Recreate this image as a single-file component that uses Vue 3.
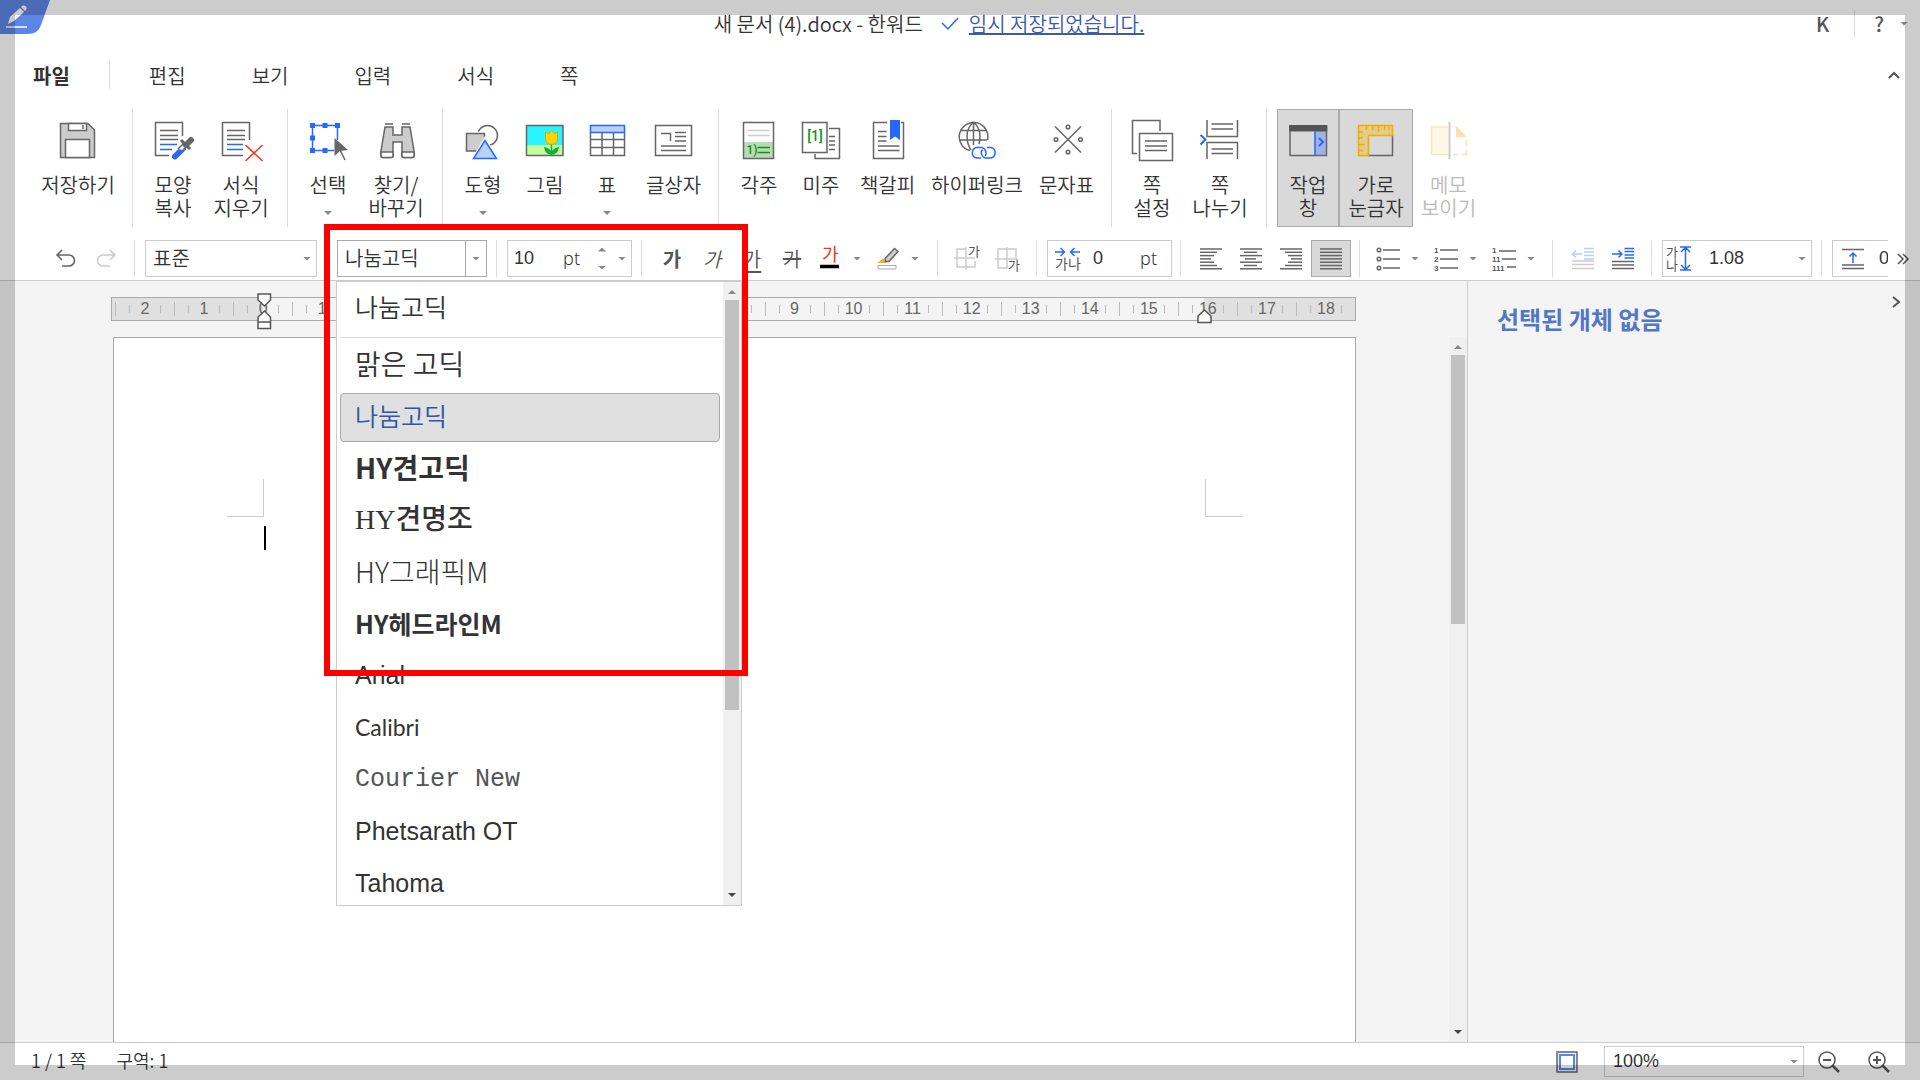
<script setup>
import { ref } from "vue";

const G = 'fill="none" stroke="#666" stroke-width="1.5"';
const B = 'fill="none" stroke="#2468ff" stroke-width="1.5"';

// 40 x 40 ribbon icons
const icons = {
  save: `<path d="M2.5 3.5H30L36.5 10V37.5H2.5Z" fill="#ccc" stroke="#666" stroke-width="1.5"/><path d="M10.5 3.5H28.5V10.5H10.5Z M7.5 19.5H31.5V37.5H7.5Z" fill="#fff" stroke="#666" stroke-width="1.5"/><path d="M25 5V9" ${G}/>`,
  copyFormat: `<path d="M29.5 16V2.5H2.5V35.5H16M7 10.5H25M7 15.5H25M7 19.5H25" ${G}/><path d="M7 24.5H24M7 29.5H19" ${B}/><path d="M22 36.5L30 28.5" stroke="#2468ff" stroke-width="6" stroke-linecap="round"/><path d="M25 29L31 23L34 26L30 30" fill="#fff" stroke="#666" stroke-width="1.5"/><path d="M33 25L38 20" stroke="#666" stroke-width="6" stroke-linecap="round"/><path d="M28 20L37 29" stroke="#666" stroke-width="3"/>`,
  clearFormat: `<path d="M28.5 20V2.5H1.5V35.5H22M6 10.5H24M6 15.5H24M6 19.5H24" ${G}/><path d="M6 24.5H22M6 29.5H22" ${B}/><path d="M24.5 25L41.5 41M41.5 25L24.5 41" fill="none" stroke="#e8391d" stroke-width="1.5"/>`,
  select: `<path d="M29.5 20V5.5H4.5V30.5H26" ${B}/><path d="M2 3h5v5H2zM14.5 3h5v5h-5zM27 3h5v5h-5zM2 15.5h5v5H2zM2 28h5v5H2zM14.5 28h5v5h-5z" fill="#2468ff"/><path d="M26.5 18L40 30L32 31L26.5 36Z" fill="#666"/><path d="M32 30L37 40" stroke="#666" stroke-width="1.5"/>`,
  find: `<path d="M9 7H17V15H26V7H34L38 31V36Q38 37.5 36 37.5H28Q26 37.5 26 36V22H17V36Q17 37.5 15 37.5H7Q5 37.5 5 36V31Z" fill="#ccc" stroke="#666" stroke-width="1.5"/><path d="M5 32H17V36Q17 37.5 15 37.5H7Q5 37.5 5 36ZM26 32H38V36Q38 37.5 36 37.5H28Q26 37.5 26 36Z" fill="#fff" stroke="#666" stroke-width="1.5"/><path d="M9 4H17M26 4H34" ${G}/>`,
  shapes: `<circle cx="24.5" cy="15.5" r="10" ${G}/><path d="M1 11.5H22V33H1Z" fill="#fff"/><path d="M3.5 13.5H21.5V31H3.5Z" fill="#ccc" stroke="#666" stroke-width="1.5"/><path d="M22 16L36 40H8Z" fill="#fff"/><path d="M22 20.5L33.5 38.5H10.5Z" fill="#bcd0ff" stroke="#2468ff" stroke-width="1.5"/>`,
  picture: `<path d="M1.5 5.5H38V35.5H1.5Z" fill="#2af4ff"/><path d="M1.5 25H38V35.5H1.5Z" fill="#c5ff9c"/><path d="M1.5 5.5H38V35.5H1.5Z" ${G}/><path d="M26.5 24V34M26.5 34Q21 34 20 28Q25 29 26.5 34Q28 29 33 28Q32 34 26.5 34" fill="#10ae3c" stroke="#10ae3c" stroke-width="1.5"/><path d="M20.5 12L23.5 14L26.5 10.5L29.5 14L32.5 12V19Q32 24 26.5 24.5Q21 24 20.5 19Z" fill="#ffd500" stroke="#e3a500"/>`,
  table: `<path d="M3.5 12.5V35.5H37.5V12.5M3.5 19.5H37.5M3.5 27.5H37.5M15 12.5V35.5M26.5 12.5V35.5" ${G}/><path d="M3.5 5.5H37.5V12.5H3.5Z" fill="#bcd0ff" stroke="#2468ff" stroke-width="1.5"/>`,
  textbox: `<path d="M1.5 5.5H37.5V35.5H1.5ZM7 13.5H16.5V21M21 12.5H32M21 16.5H32M21 21H32M7 26H32M7 30.5H32" ${G}/>`,
  footnote: `<path d="M4.5 22H34.5V38.5H4.5Z" fill="#b7dcb5"/><path d="M4.5 2.5H34.5V38.5H4.5Z" ${G}/><path d="M8.5 10.5H30.5M8.5 15.5H30.5" stroke="#ccc" stroke-width="1.5"/><text x="7.5" y="34" font-family="Roboto" font-size="12" font-weight="500" fill="#119211">1)</text><path d="M18.5 27.5H31M18.5 32.5H31" stroke="#119211" stroke-width="1.5"/>`,
  endnote: `<path d="M28 8.5H38.5V38.5H14V34M28 16.5H34M28 21H34M28 25H34M28 29.5H34" ${G}/><path d="M1.5 2.5H26V32.5H1.5Z" fill="#fff" stroke="#666" stroke-width="1.5"/><text x="14" y="21" font-family="Roboto" font-size="14" font-weight="500" text-anchor="middle" fill="#119211">[1]</text>`,
  bookmark: `<path d="M19 2.5H5.5V38.5H35.5V2.5H33M10 11.5H18.5M10 16.5H18.5M10 21H18.5M10 26H31.5M10 30.5H31.5" ${G}/><path d="M22 0H32V20L27 16.5L22 20Z" fill="#2468ff"/>`,
  hyperlink: `<path d="M13 30.6A14.3 14.3 0 1 1 30.5 20M16.5 2V25M16.5 2Q10 8 10 16Q10 24 14 30M16.5 2Q23 8 23 16Q23 21 22 24M4 10.5H29M2.5 20H30" ${G}/><path d="M24 38H19.5A5.4 5.4 0 0 1 19.5 27.5H25A5.4 5.4 0 0 1 28 36M30 27.5H34A5.4 5.4 0 0 1 34 38H28A5.4 5.4 0 0 1 25.5 29.5" ${B}/>`,
  charmap: `<path d="M8 6.5L34 32.5M34 6.5L8 32.5" ${G}/><circle cx="21" cy="7" r="1.8" ${G}/><circle cx="21" cy="32" r="1.8" ${G}/><circle cx="9" cy="19.5" r="1.8" ${G}/><circle cx="33.5" cy="19.5" r="1.8" ${G}/>`,
  pageSetup: `<path d="M28 11V.5H.5V33.5H5M7.5 13.5H40.5V40.5H7.5ZM13 21H35M13 26H35M13 30.5H35" ${G}/>`,
  pageBreak: `<path d="M7 0V16.5H37.5V0M7 39V22.5H37.5V39M11.5 4H33M11.5 9H33M11.5 29H33M11.5 33.5H33" ${G}/><path d="M.5 15L5.5 19.5L.5 24.5" fill="none" stroke="#2468ff" stroke-width="2"/>`,
  taskPane: `<path d="M26.5 10H38.5V35.5H26.5Z" fill="#9fb3e6"/><path d="M2 6H38.5V35.5H2Z" ${G}/><path d="M1.2 5H39.2V11.5H1.2Z" fill="#555"/><path d="M27 11.5V35" ${B}/><path d="M31 18L35 22L31 26" fill="none" stroke="#2468ff" stroke-width="2"/>`,
  ruler: `<path d="M36.5 15V35.5H12.5" ${G}/><path d="M2.5 5.5H36.5V15.5H12.5V35.5H2.5Z" fill="#e3cd8d" stroke="#f3ac00" stroke-width="1.5"/><path d="M10.5 6V10M16.5 6V10M22.5 6V12M28.5 6V10M33 6V10M3 12H7M3 18H7M3 24.5H8.5M3 30.5H7" stroke="#f3ac00" stroke-width="1.5"/>`,
  memo: `<path d="M19 7H2.5V34.5H19" fill="#fff7e6" stroke="#fbe6b8" stroke-width="1.5"/><path d="M20.500 2V39" stroke="#ccc" stroke-width="2"/><path d="M24 6.5H28L38 17H27V7" fill="#fbe2ac"/><path d="M37.5 20V26M37.5 30V34.5H33M29 34.5H24" fill="none" stroke="#fbe2ac" stroke-width="1.5"/>`,
};

const lines = (rows) =>
  rows.map(([a, b], i) => `<path d="M${a} ${2 + i * 3.3}H${b}" ${G}/>`).join("");
const glyph = (x, y, size, text = "가", fill = "#555") =>
  `<text x="${x}" y="${y}" font-size="${size}" font-weight="400" fill="${fill}">${text}</text>`;
const digit = (y, text) =>
  `<text x="0" y="${y}" font-family="Liberation Sans" font-size="8" font-weight="700" fill="#555">${text}</text>`;

// 24 x 24 toolbar icons
const tools = {
  undo: `<path d="M8 3L3 8L8 13M3 8H15A5.5 5.5 0 0 1 15 19H8" fill="none" stroke="#666" stroke-width="1.6"/>`,
  redo: `<path d="M16 3L21 8L16 13M21 8H9A5.5 5.5 0 0 0 9 19H16" fill="none" stroke="#ccc" stroke-width="1.6"/>`,
  fontColor: `${glyph(4, 14, 18, "가", "#e8391d")}<path d="M2 19.5H21" stroke="#000" stroke-width="3.5"/>`,
  highlight: `<path d="M1 16L7 11.5L11 16Z" fill="#f7b21a"/><path d="M9 11.5L18.5 1.5L22 4.5L13 14.5L9.5 14.5Z" fill="#ccc" stroke="#666" stroke-width="1.5"/><path d="M2 18.5H20V22H2Z" fill="#fff" stroke="#aaa"/>`,
  superscript: `<path d="M10 2H1V20H19V14M-2 11H19M10 0V23" fill="none" stroke="#ccc" stroke-width="1.5"/>${glyph(12, 9, 13)}`,
  subscript: `<path d="M11 21H2V2H20V12M-1 12H21M11 0V22" fill="none" stroke="#ccc" stroke-width="1.5"/>${glyph(12, 23, 13)}`,
  spacing: `<path d="M0 5H9M5.5 1L9.5 5L5.5 9M25 5H16M19.5 1L15.5 5L19.5 9" ${B}/>${glyph(0, 22, 14, "가나")}`,
  left: lines([[1, 23], [1, 18], [1, 15], [1, 12], [1, 15], [1, 18], [1, 23]]),
  center: lines([[1, 23], [5, 18], [1, 23], [6, 17], [1, 23], [5, 18], [1, 23]]),
  right: lines([[1, 23], [6, 23], [9, 23], [12, 23], [9, 23], [6, 23], [1, 23]]),
  justify: lines([[1, 23], [1, 23], [1, 23], [1, 23], [1, 23], [1, 23], [1, 23]]),
  bullets: `<path d="M7 3H24M7 12H24M7 21H24" ${G}/><circle cx="3" cy="3" r="1.8" ${G}/><circle cx="3" cy="12" r="1.8" ${G}/><circle cx="3" cy="21" r="1.8" ${G}/>`,
  numbers: `<path d="M6 3H24M6 12H24M6 21H24" ${G}/>${digit(6, "1")}${digit(15, "2")}${digit(24, "3")}`,
  outline: `<path d="M7 4H24M10 12H24M15 20H24" ${G}/>${digit(6, "1")}${digit(15, "11")}${digit(24, "111")}`,
  outdent: `<path d="M1 14H23M1 17.5H23M1 21.5H23" fill="none" stroke="#ccc" stroke-width="1.5"/><path d="M13 1.5H23M13 5H23M13 8.5H23M13 12H23M11 7H1.5M5 3.5L1.5 7L5 10.5" fill="none" stroke="#b9ceff" stroke-width="1.5"/>`,
  indent: `<path d="M1 14.5H23M1 18H23M1 21.5H23" ${G}/><path d="M13.5 1.5H23M13.5 4.5H23M13.5 8H23M13.5 11H23M1 7H11M7.5 3.5L11 7L7.5 10.5" ${B}/>`,
  lineHeight: `${glyph(0, 11, 13)}${glyph(0, 24, 13, "나")}<path d="M14 1H25M14 24H25M19.5 2V23M15 6L19.5 1.5L24 6M15 19L19.5 23.5L24 19" ${B}/>`,
  spaceAbove: `<path d="M1 2.5H23M1 18H23M1 21.5H23" ${G}/><path d="M12 16V6M8.5 9.5L12 6L15.5 9.5" ${B}/>`,
};

const menus = ["편집", "보기", "입력", "서식", "쪽"];

const groups = [
  [{ icon: "save", label: "저장하기", size: "w90" }],
  [
    { icon: "copyFormat", label: "모양\n복사" },
    { icon: "clearFormat", label: "서식\n지우기", size: "w74" },
  ],
  [
    { icon: "select", label: "선택", arrow: true },
    { icon: "find", label: "찾기/\n바꾸기", size: "w74" },
  ],
  [
    { icon: "shapes", label: "도형", arrow: true },
    { icon: "picture", label: "그림" },
    { icon: "table", label: "표", arrow: true },
    { icon: "textbox", label: "글상자", size: "w71" },
  ],
  [
    { icon: "footnote", label: "각주" },
    { icon: "endnote", label: "미주" },
    { icon: "bookmark", label: "책갈피", size: "w71" },
    { icon: "hyperlink", label: "하이퍼링크", size: "w108" },
    { icon: "charmap", label: "문자표", size: "w71" },
  ],
  [
    { icon: "pageSetup", label: "쪽\n설정" },
    { icon: "pageBreak", label: "쪽\n나누기", size: "w74" },
  ],
  [
    { icon: "taskPane", label: "작업\n창", pressed: true },
    { icon: "ruler", label: "가로\n눈금자", size: "w74", pressed: true },
    { icon: "memo", label: "메모\n보이기", size: "w71", disabled: true },
  ],
];

const aligns = [
  { icon: "left", label: "왼쪽 정렬" },
  { icon: "center", label: "가운데 정렬" },
  { icon: "right", label: "오른쪽 정렬" },
  { icon: "justify", label: "양쪽 정렬" },
];
const align = ref("justify");

const lists = [
  { icon: "bullets", label: "글머리 기호" },
  { icon: "numbers", label: "번호 매기기" },
  { icon: "outline", label: "다단계 목록" },
];

const fonts = [
  { name: "맑은 고딕", face: "malgun" },
  { name: "나눔고딕", face: "nanum" },
  { name: "HY견고딕", face: "heavy" },
  { name: "HY견명조", face: "myungjo" },
  { name: "HY그래픽M", face: "thin" },
  { name: "HY헤드라인M", face: "headline" },
  { name: "Arial", face: "arial" },
  { name: "Calibri", face: "calibri" },
  { name: "Courier New", face: "courier" },
  { name: "Phetsarath OT", face: "arial" },
  { name: "Tahoma", face: "arial" },
];
const font = ref("나눔고딕");
const fontSize = ref("10");
const charSpacing = ref("0");
const spaceAbove = ref("0");

const marks = Array.from({ length: 21 }, (_, i) => Math.abs(i - 2));
</script>

<template>
  <div class="app">
    <header class="header">
      <div class="titlebar">
        <svg class="logo" width="50" height="34" viewBox="0 0 50 34">
          <path d="M0 0H50L41 25Q38 34 28 34H0Z" fill="#5d85e3" />
          <path d="M8 24L10 17L20 8L24 12L14 21Z" fill="#fff" />
          <path d="M21 7L23 5.5Q25 5 26.5 7Q27 9 25 11Z" fill="#fff" />
          <path d="M6 27H27" stroke="#fff" stroke-width="1.5" />
        </svg>
        <div class="doc">
          <span>새 문서 (4).docx - 한워드</span>
          <svg width="18" height="14" viewBox="0 0 18 14">
            <path d="M1 6L7 12L17 1" fill="none" stroke="#2468ff" stroke-width="1.5" />
          </svg>
          <a href="#">임시 저장되었습니다.</a>
        </div>
        <div class="account">
          <button class="user">K</button>
          <span class="rule"></span>
          <button class="help">?</button>
          <i class="tri"></i>
        </div>
      </div>

      <nav class="menu">
        <button class="file">파일</button>
        <span class="rule"></span>
        <button v-for="m in menus" :key="m">{{ m }}</button>
        <button class="fold" aria-label="접기">
          <svg width="12" height="10" viewBox="0 0 12 10">
            <path d="M1 8L6 3L11 8" fill="none" stroke="#555" stroke-width="2" />
          </svg>
        </button>
      </nav>

      <div class="ribbon">
        <div v-for="(group, i) in groups" :key="i" class="group">
          <button
            v-for="item in group"
            :key="item.icon"
            :class="[item.size, { pressed: item.pressed }]"
            :disabled="item.disabled"
          >
            <svg width="40" height="40" viewBox="0 0 40 40" v-html="icons[item.icon]"></svg>
            <span class="label">{{ item.label }}</span>
            <i v-if="item.arrow" class="tri"></i>
          </button>
        </div>
      </div>

      <div class="toolbar">
        <button class="tool" aria-label="되돌리기">
          <svg width="24" height="24" viewBox="0 0 24 24" v-html="tools.undo"></svg>
        </button>
        <button class="tool" aria-label="다시 실행" disabled>
          <svg width="24" height="24" viewBox="0 0 24 24" v-html="tools.redo"></svg>
        </button>
        <span class="sep tight"></span>
        <div class="field style-field">
          <select aria-label="스타일">
            <option>표준</option>
          </select>
          <i class="tri"></i>
        </div>
        <span class="sep"></span>
        <div class="field combo">
          <input v-model="font" aria-label="글꼴" />
          <button class="combo-arrow" aria-label="글꼴 목록"><i class="tri"></i></button>

          <div class="font-menu">
            <ul>
              <li class="recent">
                <button class="nanum">나눔고딕</button>
              </li>
              <li v-for="f in fonts" :key="f.name">
                <button :class="[f.face, { current: f.name === font }]" @click="font = f.name">
                  {{ f.name }}
                </button>
              </li>
            </ul>
            <div class="scrollbar">
              <i class="tri up"></i>
              <div class="thumb font-thumb"></div>
              <i class="tri dark"></i>
            </div>
          </div>
          <div class="highlight-box"></div>
        </div>
        <span class="sep"></span>
        <div class="field number">
          <input v-model="fontSize" aria-label="글자 크기" />
          <span class="unit">pt</span>
          <span class="spin"><i class="tri up"></i><i class="tri"></i></span>
          <i class="tri"></i>
        </div>
        <span class="sep"></span>
        <button class="tool char bold">가</button>
        <button class="tool char italic">가</button>
        <button class="tool char underline">가</button>
        <button class="tool char strike">가</button>
        <button class="split" aria-label="글자 색">
          <svg width="24" height="24" viewBox="0 0 24 24" v-html="tools.fontColor"></svg>
          <i class="tri"></i>
        </button>
        <button class="split" aria-label="형광펜">
          <svg width="24" height="24" viewBox="0 0 24 24" v-html="tools.highlight"></svg>
          <i class="tri"></i>
        </button>
        <span class="sep"></span>
        <button class="tool" aria-label="위 첨자">
          <svg width="24" height="24" viewBox="0 0 24 24" v-html="tools.superscript"></svg>
        </button>
        <button class="tool" aria-label="아래 첨자">
          <svg width="24" height="24" viewBox="0 0 24 24" v-html="tools.subscript"></svg>
        </button>
        <span class="sep tight"></span>
        <div class="field spacing">
          <svg width="24" height="24" viewBox="0 0 24 24" v-html="tools.spacing"></svg>
          <input v-model="charSpacing" aria-label="자간" />
          <span class="unit">pt</span>
        </div>
        <span class="sep tight"></span>
        <button
          v-for="a in aligns"
          :key="a.icon"
          class="tool"
          :class="{ pressed: align === a.icon }"
          :aria-label="a.label"
          @click="align = a.icon"
        >
          <svg width="24" height="24" viewBox="0 0 24 24" v-html="tools[a.icon]"></svg>
        </button>
        <span class="sep tight"></span>
        <button v-for="l in lists" :key="l.icon" class="split" :aria-label="l.label">
          <svg width="24" height="24" viewBox="0 0 24 24" v-html="tools[l.icon]"></svg>
          <i class="tri"></i>
        </button>
        <span class="sep tight"></span>
        <button class="tool" aria-label="내어쓰기" disabled>
          <svg width="24" height="24" viewBox="0 0 24 24" v-html="tools.outdent"></svg>
        </button>
        <button class="tool" aria-label="들여쓰기">
          <svg width="24" height="24" viewBox="0 0 24 24" v-html="tools.indent"></svg>
        </button>
        <span class="sep tight"></span>
        <div class="field line-field">
          <svg width="26" height="25" viewBox="0 0 26 25" v-html="tools.lineHeight"></svg>
          <select aria-label="줄 간격">
            <option>1.08</option>
          </select>
          <i class="tri"></i>
        </div>
        <span class="sep"></span>
        <div class="field above">
          <svg width="24" height="24" viewBox="0 0 24 24" v-html="tools.spaceAbove"></svg>
          <input v-model="spaceAbove" aria-label="문단 위 간격" />
        </div>
        <button class="more" aria-label="더 보기">
          <svg width="12" height="12" viewBox="0 0 12 12">
            <path d="M1 1L6 6L1 11M6 1L11 6L6 11" fill="none" stroke="#555" stroke-width="1.5" />
          </svg>
        </button>
      </div>
    </header>

    <main class="body">
      <section class="canvas">
        <div class="ruler">
          <div v-for="(n, i) in marks" :key="i" class="mark">
            <i class="tick"></i><span>{{ n }}</span><i class="tick"></i>
          </div>
          <svg class="stop-left" width="15" height="37" viewBox="0 0 15 37">
            <path
              d="M1 1H13.5V7L7.5 13L1 7ZM7.5 18L13.5 24V29H1V24ZM1 29H13.5V35.5H1Z"
              fill="#fff"
              stroke="#555"
              stroke-width="1.5"
            />
          </svg>
          <svg class="stop-right" width="15" height="15" viewBox="0 0 15 15">
            <path d="M7.5 1L14 7V13.5H1V7Z" fill="#fff" stroke="#555" stroke-width="1.5" />
          </svg>
        </div>
        <article class="page">
          <div class="margins">
            <i class="corner"></i>
            <i class="corner end"></i>
          </div>
          <div class="caret"></div>
        </article>
        <div class="scrollbar page-scroll">
          <i class="tri up"></i>
          <div class="thumb page-thumb"></div>
          <i class="tri dark"></i>
        </div>
      </section>
      <aside class="pane">
        <h2>선택된 개체 없음</h2>
        <button aria-label="닫기">
          <svg width="10" height="12" viewBox="0 0 10 12">
            <path d="M2 1L8 6L2 11" fill="none" stroke="#555" stroke-width="2" />
          </svg>
        </button>
      </aside>
    </main>

    <footer class="status">
      <span>1 / 1 쪽</span>
      <span>구역: 1</span>
      <button class="fit" aria-label="쪽 맞춤">
        <svg width="22" height="22" viewBox="0 0 22 22">
          <path d="M1 1H21V21H1Z" fill="#eee" stroke="#666" stroke-width="1.5" />
          <path d="M4 4H18V18H4Z" fill="#fff" stroke="#5186ff" stroke-width="2" />
        </svg>
      </button>
      <div class="field zoom">
        <select aria-label="확대 비율">
          <option>100%</option>
        </select>
        <i class="tri"></i>
      </div>
      <button class="lens" aria-label="축소">
        <svg width="22" height="22" viewBox="0 0 22 22">
          <circle cx="9" cy="9" r="8" fill="none" stroke="#555" stroke-width="1.5" />
          <path d="M5 9H13" stroke="#555" stroke-width="2" />
          <path d="M14 14L21 21" stroke="#555" stroke-width="2.5" />
        </svg>
      </button>
      <button class="lens" aria-label="확대">
        <svg width="22" height="22" viewBox="0 0 22 22">
          <circle cx="9" cy="9" r="8" fill="none" stroke="#555" stroke-width="1.5" />
          <path d="M5 9H13M9 5V13" stroke="#555" stroke-width="2" />
          <path d="M14 14L21 21" stroke="#555" stroke-width="2.5" />
        </svg>
      </button>
    </footer>

    <div class="frame"></div>
  </div>
</template>

<style>
body {
  margin: 0;
}
</style>

<style scoped>
.app {
  display: flex;
  flex-direction: column;
  height: 100vh;
  overflow: hidden;
  color: #333;
  background: #fff;
  font: 350 20px/23px "Noto Sans CJK KR", "Noto Sans", sans-serif;
}

.app * {
  box-sizing: border-box;
}

button,
input,
select {
  margin: 0;
  padding: 0;
  border: 0;
  border-radius: 0;
  outline: 0;
  background: none;
  color: inherit;
  font: inherit;
  appearance: none;
}

svg {
  display: block;
  flex: none;
  overflow: visible;
}

.tri {
  flex: none;
  width: 8px;
  height: 4px;
  background: #888;
  clip-path: polygon(0 0, 100% 0, 50% 100%);
}

.tri.up {
  clip-path: polygon(0 100%, 100% 100%, 50% 0);
}

.tri.dark {
  background: #444;
}

.rule {
  width: 1px;
  height: 28px;
  background: #ddd;
}

.header {
  position: relative;
  z-index: 2;
  border-bottom: 1px solid #ccc;
  background: #fff;
}

.titlebar {
  display: grid;
  grid-template-columns: 1fr auto 1fr;
  height: 47px;
}

.doc {
  display: flex;
  align-items: center;
  gap: 12px;
  margin-right: 62px;
  white-space: nowrap;
}

.doc svg {
  margin: 0 -2px 0 6px;
}

.doc a {
  color: #3a5ba9;
  text-decoration: underline;
}

.account {
  display: flex;
  align-items: center;
  justify-content: flex-end;
  padding-right: 12px;
  color: #555;
  font-weight: 500;
}

.account .rule {
  margin: 0 19px 0 25px;
}

.help {
  margin-right: 16px;
}

.menu {
  display: flex;
  align-items: center;
  height: 56px;
  padding-left: 33px;
}

.menu button {
  padding: 0 33px;
}

.menu .file {
  padding: 0 39px 0 0;
  font-weight: 700;
}

.menu .rule {
  margin-right: 6px;
}

.menu .fold {
  margin-left: auto;
  padding: 0 20px;
}

.ribbon {
  display: flex;
  height: 124px;
  padding: 6px 0 0 24px;
}

.group {
  display: flex;
  padding: 0 9px;
  border-right: 1px solid #ddd;
}

.group:last-child {
  padding-left: 10px;
  border: 0;
}

.group button {
  display: flex;
  flex-direction: column;
  align-items: center;
  width: 62px;
  height: 118px;
  padding-top: 11px;
}

.group .w71 {
  width: 71px;
}

.group .w74 {
  width: 74px;
}

.group .w90 {
  width: 90px;
}

.group .w108 {
  width: 108px;
}

.label {
  margin-top: 13px;
  white-space: pre;
}

.group .tri {
  margin-top: 15px;
}

.pressed {
  border: 1px solid #aaa;
  background: #d9d9d9;
}

.group .pressed {
  padding-top: 10px;
}

button:disabled {
  color: #bbb;
}

.toolbar {
  display: flex;
  align-items: center;
  height: 53px;
  padding: 10px 10px 0 46px;
}

.sep {
  flex: none;
  width: 1px;
  height: 37px;
  margin: 0 10px 0 9px;
  background: #ddd;
}

.sep.tight {
  margin-left: 8px;
}

.tool {
  display: flex;
  flex: none;
  align-items: center;
  justify-content: center;
  width: 40px;
  height: 37px;
}

.char {
  color: #555;
}

.bold {
  font-weight: 700;
}

.italic {
  font-style: italic;
}

.underline {
  text-decoration: underline;
  text-underline-offset: 4px;
}

.strike {
  text-decoration: line-through;
}

.split {
  display: flex;
  flex: none;
  align-items: center;
  width: 58px;
  height: 37px;
  padding-left: 6px;
}

.split .tri {
  margin-left: 11px;
}

.field {
  display: flex;
  flex: none;
  align-items: center;
  height: 37px;
  padding: 0 8px;
  border: 1px solid #ccc;
  background: #fff;
}

.field input,
.field select {
  flex: 1;
  min-width: 0;
  height: 30px;
}

.style-field {
  width: 172px;
  padding: 0 5px 0 7px;
}

.style-field select,
.combo > input {
  padding-bottom: 3px;
}

.combo {
  position: relative;
  width: 150px;
  padding: 0 0 0 7px;
  border-color: #aaa;
}

.combo-arrow {
  display: flex;
  align-items: center;
  justify-content: center;
  width: 21px;
  height: 35px;
  border-left: 1px solid #aaa;
}

.number,
.spacing,
.line-field,
.above,
.zoom {
  font-family: "Liberation Sans", "Noto Sans CJK KR", sans-serif;
  font-size: 18px;
}

.unit {
  font-family: "Noto Sans", sans-serif;
}

.number {
  width: 125px;
  padding: 0 5px 0 6px;
}

.number .unit {
  margin-right: 18px;
}

.spin {
  display: flex;
  flex-direction: column;
  gap: 14px;
  margin-right: 12px;
}

.spacing {
  width: 125px;
  padding: 0 14px 0 7px;
}

.spacing input {
  margin-left: 14px;
}

.line-field {
  width: 150px;
  padding: 0 5px 0 3px;
}

.line-field select {
  margin-left: 17px;
}

.above {
  width: 56px;
  border-right: 0;
  padding-right: 0;
}

.above input {
  margin-left: 14px;
}

.more {
  margin-left: 9px;
}

.font-menu {
  position: absolute;
  top: 40px;
  left: -2px;
  z-index: 3;
  display: flex;
  width: 406px;
  height: 625px;
  border: 1px solid #ccc;
  background: #fff;
}

.font-menu ul {
  flex: 1;
  margin: 0;
  padding: 1px 0 0 3px;
  overflow: hidden;
  list-style: none;
}

.font-menu li {
  height: 52px;
  padding: 1px 3px 2px 0;
}

.font-menu .recent {
  height: 55px;
  margin-bottom: 2px;
  padding-right: 0;
  border-bottom: 1px solid #ddd;
}

.font-menu li button {
  display: block;
  width: 100%;
  height: 49px;
  padding: 0 0 4px 14px;
  border: 1px solid transparent;
  border-radius: 4px;
  text-align: left;
  font-size: 25px;
  line-height: 43px;
}

.font-menu .current {
  border-color: #aaa;
  background: #e0e0e0;
  color: #2f55a4;
}

.font-menu .heavy,
.font-menu .headline {
  font-weight: 700;
}

.font-menu li .malgun,
.font-menu li .heavy,
.font-menu li .myungjo,
.font-menu li .thin {
  font-size: 28px;
}

.font-menu .myungjo {
  font-family: "Liberation Serif", "Noto Sans CJK KR", serif;
  font-weight: 500;
}

.font-menu .thin {
  font-weight: 300;
}

.font-menu .arial {
  font-family: "Liberation Sans", sans-serif;
}

.font-menu li .calibri {
  font-family: Lato, sans-serif;
  font-size: 23px;
  font-weight: 400;
}

.font-menu .courier {
  color: #555;
  font-family: "Liberation Mono", monospace;
}

.scrollbar {
  display: flex;
  flex: none;
  flex-direction: column;
  align-items: center;
  width: 18px;
  padding: 8px 0;
  background: #f0f0f0;
}

.thumb {
  width: 14px;
  margin: 6px 0 auto;
  background: #c1c1c1;
}

.font-thumb {
  height: 410px;
}

.page-thumb {
  height: 269px;
}

.highlight-box {
  position: absolute;
  top: -17px;
  left: -14px;
  z-index: 4;
  width: 424px;
  height: 452px;
  border: 6px solid #f00;
  pointer-events: none;
}

.body {
  display: flex;
  flex: 1;
  min-height: 0;
  background: #f4f4f4;
}

.canvas {
  position: relative;
  display: flex;
  flex: 1;
  flex-direction: column;
  align-items: center;
  min-width: 0;
  overflow: hidden;
}

.ruler {
  position: relative;
  display: flex;
  flex: none;
  width: 1245px;
  height: 24px;
  margin: 16px 0;
  padding-left: 3px;
  border: 1px solid #aaa;
  background: linear-gradient(to right, #e0e0e0 151px, #f4f4f4 151px 1092px, #e0e0e0 1092px);
  color: #666;
  font: 16px/22px "Liberation Sans", sans-serif;
}

.mark {
  display: flex;
  flex: 1;
  align-items: center;
  justify-content: space-between;
  padding: 0 13px 0 14px;
  background: linear-gradient(#bbb, #bbb) no-repeat 0 4px / 1px 14px;
}

.mark span {
  width: 0;
  display: flex;
  justify-content: center;
}

.tick {
  width: 1px;
  height: 8px;
  background: #bbb;
}

.stop-left {
  position: absolute;
  top: -5px;
  left: 145px;
}

.stop-right {
  position: absolute;
  top: 11px;
  left: 1085px;
}

.page {
  flex: 1;
  width: 1243px;
  margin-left: 2px;
  padding: 141px 149px 0 113px;
  border: 1px solid #aaa;
  border-bottom: 0;
  background: #fff;
}

.margins {
  display: flex;
  justify-content: space-between;
  margin-right: -36px;
}

.corner {
  width: 37px;
  height: 38px;
  border: solid #ccc;
  border-width: 0 1px 1px 0;
}

.corner.end {
  border-width: 0 0 1px 1px;
}

.caret {
  width: 2px;
  height: 24px;
  margin: 9px 0 0 37px;
  background: #000;
}

.page-scroll {
  position: absolute;
  top: 56px;
  right: 0;
  bottom: 0;
}

.pane {
  display: flex;
  align-items: flex-start;
  justify-content: space-between;
  width: 453px;
  padding: 15px 19px 0 29px;
  border-left: 1px solid #ccc;
}

.pane h2 {
  margin: 8px 0 0;
  color: #5277c7;
  font-size: 24px;
  font-weight: 700;
  line-height: 30px;
}

.status {
  display: flex;
  flex: none;
  align-items: center;
  gap: 30px;
  height: 38px;
  padding: 0 30px 0 31px;
  border-top: 1px solid #ccc;
  font-size: 18px;
}

.status span {
  padding-bottom: 2px;
}

.fit {
  margin-left: auto;
}

.zoom {
  width: 200px;
  height: 31px;
  margin: 0 -16px 0 -4px;
  padding-right: 5px;
}

.zoom select {
  height: 26px;
}

.lens + .lens {
  margin-left: -2px;
}

.frame {
  position: fixed;
  inset: 0;
  z-index: 9;
  border: 15px solid rgba(0, 0, 0, 0.2);
  pointer-events: none;
}
</style>
